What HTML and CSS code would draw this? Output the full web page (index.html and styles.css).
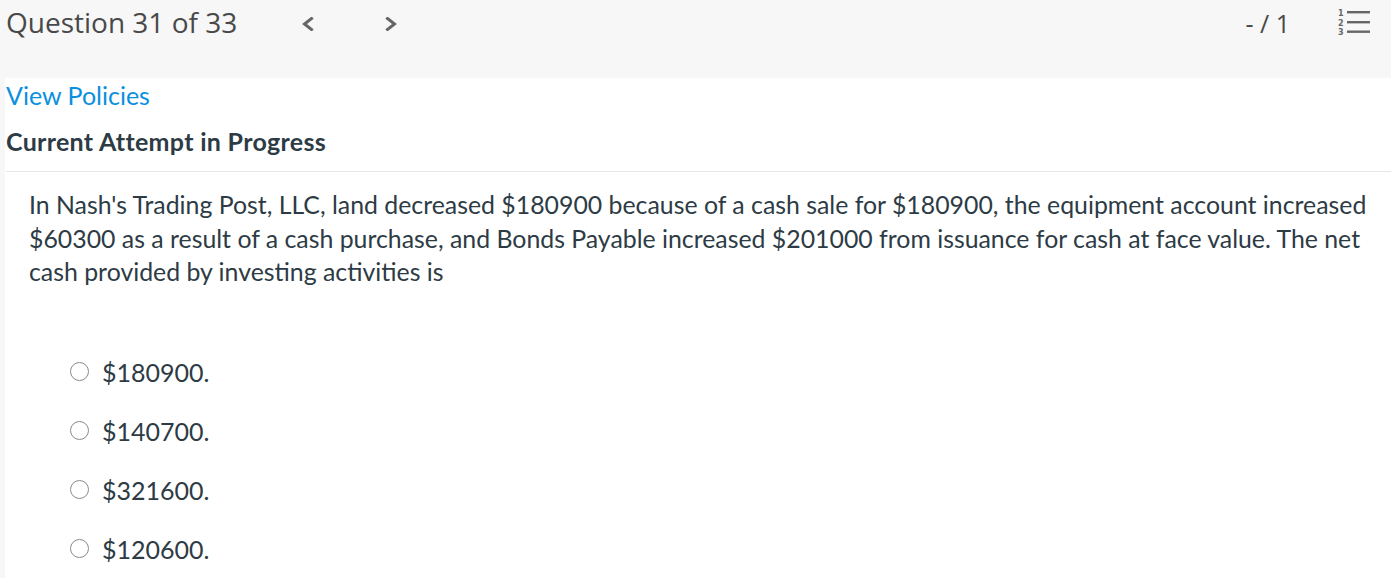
FILE: index.html
```html
<!DOCTYPE html>
<html lang="en">
<head>
<meta charset="utf-8">
<title>Question 31 of 33</title>
<link rel="stylesheet" href="styles.css">
</head>
<body>
<header class="topbar">
  <div class="title">Question 31 of 33</div>
  <nav class="qnav">
    <button class="navbtn" aria-label="Previous question">
      <svg width="12" height="14" viewBox="0 0 12 14"><path d="M9.5 1.5 L2.5 7 L9.5 12.5" fill="none" stroke="#666" stroke-width="3" stroke-linecap="square"/></svg>
    </button>
    <button class="navbtn next" aria-label="Next question">
      <svg width="12" height="14" viewBox="0 0 12 14"><path d="M2.5 1.5 L9.5 7 L2.5 12.5" fill="none" stroke="#666" stroke-width="3" stroke-linecap="square"/></svg>
    </button>
  </nav>
  <div class="score">- / 1</div>
  <div class="listicon" aria-label="Question list">
    <svg width="33" height="26" viewBox="0 0 33 26">
      <text x="0" y="7" class="num">1</text>
      <text x="0" y="16.5" class="num">2</text>
      <text x="0" y="25.5" class="num">3</text>
      <rect x="9" y="2" width="23" height="2.4" fill="#666"/>
      <rect x="9" y="12" width="23" height="2.4" fill="#666"/>
      <rect x="9" y="21.5" width="23" height="2.4" fill="#666"/>
    </svg>
  </div>
</header>
<main class="content">
  <a class="policies" href="#">View Policies</a>
  <h2 class="attempt">Current Attempt in Progress</h2>
  <section class="question">
    <p class="qtext">In Nash's Trading Post, LLC, land decreased $180900 because of a cash sale for $180900, the equipment account increased $60300 as a result of a cash purchase, and Bonds Payable increased $201000 from issuance for cash at face value. The net cash provided by investing activities is</p>
    <ul class="options">
      <li class="option"><span class="radio"></span><span class="label">$180900.</span></li>
      <li class="option"><span class="radio"></span><span class="label">$140700.</span></li>
      <li class="option"><span class="radio"></span><span class="label">$321600.</span></li>
      <li class="option"><span class="radio"></span><span class="label">$120600.</span></li>
    </ul>
  </section>
</main>
</body>
</html>
```

FILE: styles.css
```css
html, body {
  margin: 0;
  padding: 0;
}
body {
  background: #f7f7f7;
  font-family: Lato, "Open Sans", sans-serif;
  color: #2d3b45;
}
.topbar {
  height: 78px;
  background: #f7f7f7;
  display: flex;
  align-items: flex-start;
}
.title {
  font-family: "Open Sans", sans-serif;
  font-size: 28px;
  line-height: 38px;
  color: #494949;
  margin-left: 6px;
  padding-top: 3px;
  width: 258px;
}
.qnav {
  display: flex;
  gap: 71px;
  padding-top: 17px;
  margin-left: 38px;
}
.navbtn {
  border: 0;
  background: none;
  padding: 0;
  width: 12px;
  height: 14px;
  display: block;
}
.navbtn svg { display: block; }
.score {
  margin-left: auto;
  font-family: "Open Sans", sans-serif;
  font-size: 25px;
  line-height: 34px;
  color: #494949;
  padding-top: 6px;
}
.listicon {
  margin-left: 48px;
  margin-right: 20px;
  padding-top: 9px;
}
.listicon svg { display: block; }
.num {
  font-family: "DejaVu Sans", sans-serif;
  font-size: 8px;
  font-weight: bold;
  fill: #666;
}
.content {
  margin-left: 5px;
  background: #fff;
  min-height: 500px;
  padding: 2px 0 0 1px;
}
.policies {
  display: block;
  font-size: 25px;
  line-height: 30px;
  color: #0b8fdf;
  text-decoration: none;
}
.attempt {
  margin: 16px 0 0;
  font-size: 25px;
  line-height: 30px;
  font-weight: bold;
  letter-spacing: 0.3px;
  color: #2d3b45;
  padding-bottom: 15px;
  border-bottom: 1px solid #e6e6e6;
}
.question {
  padding: 16px 4px 0 23px;
}
.qtext {
  margin: 0;
  font-size: 24.85px;
  line-height: 33.5px;
}
.options {
  list-style: none;
  margin: 68px 0 0;
  padding: 0 0 0 41px;
  display: flex;
  flex-direction: column;
  gap: 29px;
}
.option {
  display: flex;
  align-items: center;
  gap: 13px;
  font-size: 25px;
  line-height: 30px;
}
.radio {
  width: 17px;
  height: 17px;
  border: 1px solid #8a8a8a;
  border-radius: 50%;
  background: #fff;
  flex: none;
}
```
